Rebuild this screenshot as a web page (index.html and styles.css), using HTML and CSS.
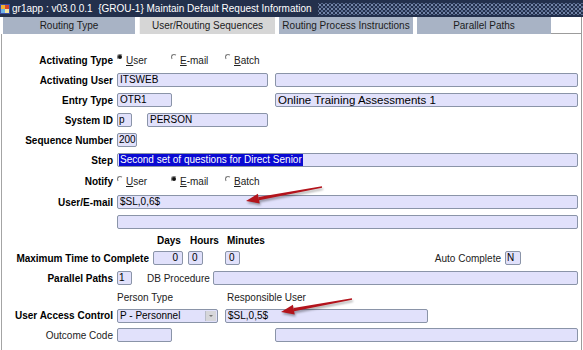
FILE: index.html
```html
<!DOCTYPE html>
<html lang="en">
<head>
  <meta charset="UTF-8">
  <title>Maintain Default Request Information</title>
  <link rel="stylesheet" href="styles.css">
</head>
<body>
  <div class="window">
    <div class="titlebar">
      <svg class="app-icon" width="10" height="12" viewBox="0 0 10 12">
        <rect x="0" y="1" width="10" height="10" fill="#3b4fa8"/>
        <rect x="1" y="2" width="4" height="4" fill="#f2b233"/>
        <rect x="5" y="2" width="4" height="4" fill="#d94a2b"/>
        <rect x="1" y="6" width="4" height="4" fill="#6fb4e8"/>
        <rect x="5" y="6" width="4" height="4" fill="#f5e6a0"/>
      </svg>
      <span class="title">gr1app : v03.0.0.1&nbsp; {GROU-1} Maintain Default Request Information</span>
      <span class="dots"></span>
    </div>

    <div class="tabs">
      <div class="tab">Routing Type</div>
      <div class="tab active">User/Routing Sequences</div>
      <div class="tab">Routing Process Instructions</div>
      <div class="tab">Parallel Paths</div>
      <div class="tab-fill"></div>
    </div>

    <div class="panel">
      <div class="row">
        <span class="lbl">Activating Type</span>
        <span class="opt"><i class="radio on"></i><u>U</u>ser</span>
        <span class="opt"><i class="radio"></i><u>E</u>-mail</span>
        <span class="opt"><i class="radio"></i><u>B</u>atch</span>
      </div>
      <div class="row">
        <span class="lbl">Activating User</span>
        <div class="field f-user">ITSWEB</div>
        <div class="field grow gap-desc"></div>
      </div>
      <div class="row">
        <span class="lbl">Entry Type</span>
        <div class="field f-code">OTR1</div>
        <div class="field grow gap-code desc">Online Training Assessments 1</div>
      </div>
      <div class="row">
        <span class="lbl">System ID</span>
        <div class="field f-tiny">p</div>
        <div class="field f-sysname">PERSON</div>
      </div>
      <div class="row">
        <span class="lbl">Sequence Number</span>
        <div class="field f-seq">200</div>
      </div>
      <div class="row">
        <span class="lbl">Step</span>
        <div class="field grow"><span class="selected">Second set of questions for Direct Senior</span></div>
      </div>
      <div class="row row-notify">
        <span class="lbl">Notify</span>
        <span class="opt"><i class="radio"></i><u>U</u>ser</span>
        <span class="opt"><i class="radio on"></i><u>E</u>-mail</span>
        <span class="opt"><i class="radio"></i><u>B</u>atch</span>
      </div>
      <div class="row">
        <span class="lbl">User/E-mail</span>
        <div class="field grow">$SL,0,6$</div>
      </div>
      <div class="row">
        <span class="lbl"></span>
        <div class="field grow"></div>
      </div>
      <div class="row time-head">
        <span class="th-days">Days</span>
        <span class="th-hours">Hours</span>
        <span>Minutes</span>
      </div>
      <div class="row">
        <span class="lbl lbl-wide">Maximum Time to Complete</span>
        <div class="field f-days">0</div>
        <div class="field f-tiny f-hours">0</div>
        <div class="field f-tiny f-mins">0</div>
        <span class="grow"></span>
        <span class="plain-lbl">Auto Complete</span>
        <div class="field f-auto">N</div>
      </div>
      <div class="row">
        <span class="lbl">Parallel Paths</span>
        <div class="field f-tiny">1</div>
        <span class="plain-lbl db-lbl">DB Procedure</span>
        <div class="field grow"></div>
      </div>
      <div class="row sub-head">
        <span class="th-person">Person Type</span>
        <span>Responsible User</span>
      </div>
      <div class="row row-uac">
        <span class="lbl">User Access Control</span>
        <div class="field select">P - Personnel<span class="drop"></span></div>
        <div class="field f-resp">$SL,0,5$</div>
      </div>
      <div class="row">
        <span class="lbl plain">Outcome Code</span>
        <div class="field f-code"></div>
        <div class="field grow gap-outcome"></div>
      </div>
    </div>

    <!-- callout arrows drawn over the form -->
    <svg class="arrows" width="583" height="350" viewBox="0 0 583 350">
      <g class="arrow">
        <polygon points="321.9,186.3 322.1,187.7 259.1,200.2 258.5,197.0"/>
        <polygon points="246,201 257.9,193.7 259.7,203.5"/>
      </g>
      <g class="arrow">
        <polygon points="351.9,298.3 352.1,299.7 294.1,311.3 293.5,308.1"/>
        <polygon points="281,312 292.9,304.8 294.7,314.6"/>
      </g>
    </svg>
  </div>
</body>
</html>
```

FILE: styles.css
```css
body {
  margin: 0;
  background-color: #fff;
  font-family: "Liberation Sans", Arial, sans-serif;
  font-size: 10px;
  color: #000;
}
.window {
  position: relative;
  width: 583px;
  height: 350px;
  overflow: hidden;
  display: flex;
  flex-direction: column;
}
.titlebar {
  height: 17px;
  background-color: #23304c;
  display: flex;
  align-items: center;
  color: #fff;
}
.app-icon {
  margin: 0 2px 0 0;
  flex-shrink: 0;
}
.title {
  font-size: 10px;
  white-space: nowrap;
  padding-right: 6px;
}
.dots {
  flex: 1;
  height: 12px;
  background-image:
    radial-gradient(circle, #7385a8 0.8px, transparent 1.2px),
    radial-gradient(circle, #5a6c90 0.8px, transparent 1.2px);
  background-size: 4px 4px, 4px 4px;
  background-position: 0 0, 2px 2px;
}
.tabs {
  height: 17px;
  display: flex;
  padding-left: 3px;
  background-color: #fff;
}
.tab {
  width: 134px;
  margin-right: 4px;
  background-color: #a8b3c5;
  color: #1c1c1c;
  text-align: center;
  line-height: 17px;
  white-space: nowrap;
}
.tab:first-child {
  width: 132px;
}
.tab.active {
  width: 136px;
  background-color: #d6d6d6;
  border-left: 1px solid #f4f4f4;
  box-sizing: border-box;
}
.tab-fill {
  flex: 1;
  margin-left: -4px;
  border-bottom: 1px solid #9c9c9c;
  border-right: 1px solid #9c9c9c;
  margin-right: 1px;
  box-sizing: border-box;
}
.panel {
  flex: 1;
  margin-left: 1px;
  margin-right: 1px;
  border-left: 1px solid #a4a4a4;
  border-right: 1px solid #9c9c9c;
  padding: 16px 3px 0 2px;
}
.row {
  display: flex;
  align-items: center;
  height: 20px;
}
.lbl {
  width: 109px;
  margin-right: 4px;
  flex-shrink: 0;
  text-align: right;
  font-weight: bold;
  white-space: nowrap;
}
.lbl.plain {
  font-weight: normal;
  color: #222;
}
.lbl-wide {
  width: 145px;
}
.plain-lbl {
  color: #222;
  white-space: nowrap;
  margin-right: 4px;
}
.opt {
  width: 54px;
  display: flex;
  align-items: center;
  color: #222;
}
.radio {
  display: inline-block;
  position: relative;
  top: -3px;
  width: 6px;
  height: 6px;
  margin-right: 3px;
  box-sizing: border-box;
  border-radius: 50%;
  border: 1px solid transparent;
  border-top-color: #7a7a7a;
  border-left-color: #7a7a7a;
}
.radio.on::after {
  content: "";
  position: absolute;
  left: 0;
  top: 0;
  width: 4px;
  height: 4px;
  border-radius: 50%;
  background-color: #111;
}
.row-notify {
  height: 21px;
  padding-top: 1px;
}
.field {
  height: 14px;
  box-sizing: border-box;
  border: 1px solid #8a94a8;
  border-radius: 2px;
  background-color: #e1e1fb;
  padding: 0 2px;
  line-height: 12px;
  white-space: nowrap;
  overflow: hidden;
  flex-shrink: 0;
}
.grow {
  flex: 1;
}
.field.grow {
  flex-shrink: 1;
}
.desc {
  font-size: 11.5px;
}
.selected {
  display: inline-block;
  background-color: #0a0ad2;
  color: #fff;
  line-height: 12px;
  margin-left: -1px;
  padding: 0 1px;
}
.f-user { width: 151px; }
.f-code { width: 55px; }
.f-tiny { width: 15px; padding: 0 1px; }
.f-seq { width: 20px; padding: 0 1px; }
.f-sysname { width: 121px; margin-left: 15px; }
.gap-desc { margin-left: 7px; }
.gap-code { margin-left: 103px; }
.gap-outcome { margin-left: 103px; }
.time-head {
  height: 16px;
  padding-left: 153px;
  font-weight: bold;
}
.th-days { width: 33px; }
.th-hours { width: 37px; }
.f-days {
  width: 30px;
  text-align: right;
  padding-right: 4px;
}
.f-hours { margin-left: 5px; padding-left: 3px; }
.f-mins { margin-left: 22px; padding-left: 3px; }
.f-auto {
  width: 16px;
  margin-right: 57px;
  padding: 0 1px;
}
.db-lbl {
  margin-left: 15px;
  margin-right: 3px;
}
.sub-head {
  height: 18px;
  padding-left: 113px;
  color: #222;
}
.th-person { width: 110px; }
.row-uac { height: 19px; }
.select {
  width: 101px;
  position: relative;
  padding-right: 14px;
}
.drop {
  position: absolute;
  right: 1px;
  top: 1px;
  width: 10px;
  height: 10px;
  background-color: #d6d6da;
  border-left: 1px solid #b8bcc8;
}
.drop::after {
  content: "";
  position: absolute;
  left: 3px;
  top: 4px;
  border-left: 2px solid transparent;
  border-right: 2px solid transparent;
  border-top: 2px solid #777;
}
.f-resp {
  width: 203px;
  margin-left: 7px;
}
.arrows {
  position: absolute;
  left: 0;
  top: 0;
  pointer-events: none;
}
.arrow {
  fill: #b3141c;
  filter: drop-shadow(1px 2px 1px rgba(0, 0, 0, 0.35));
}
```
